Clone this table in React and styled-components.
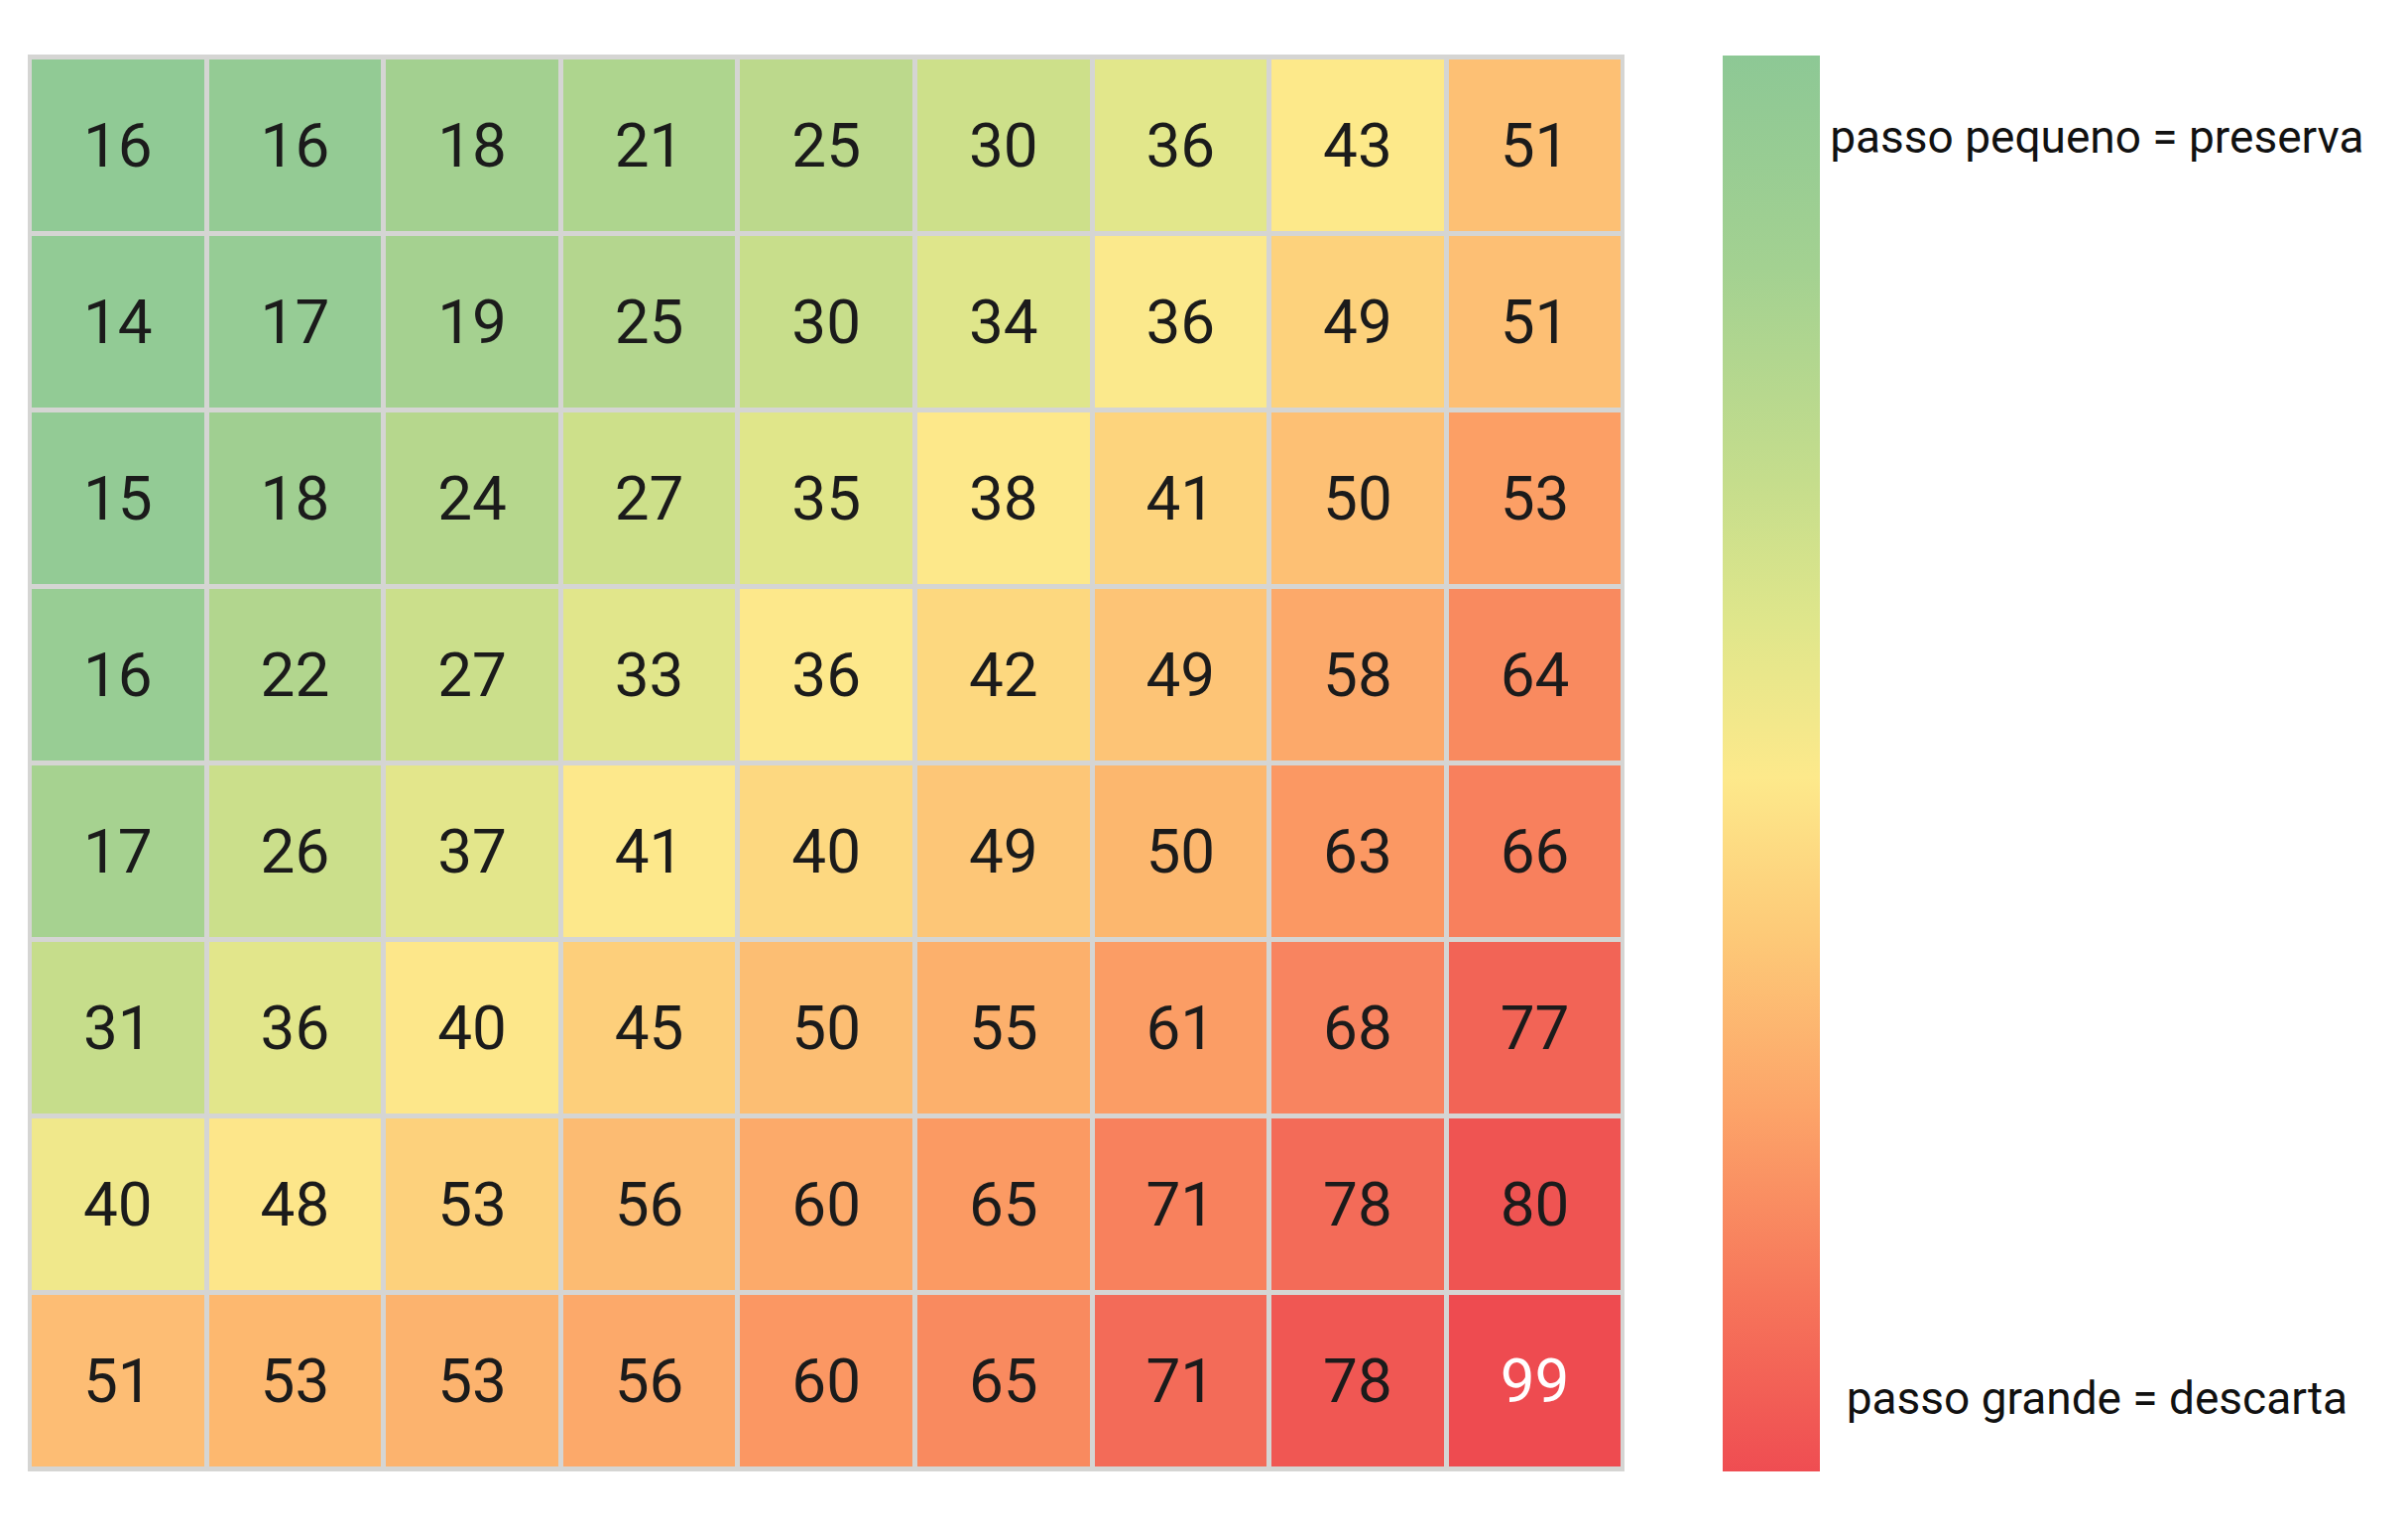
import styled, { createGlobalStyle } from 'styled-components';

const GlobalStyle = createGlobalStyle`
  html, body {
    margin: 0;
    padding: 0;
    background: #ffffff;
  }
  body {
    font-family: Roboto, "Liberation Sans", sans-serif;
  }
`

// [value, background] per row, read off the heat map
const rows = [
  [[16, '#90ca95'], [16, '#94cb94'], [18, '#a3d090'], [21, '#aed58e'], [25, '#bcd98c'], [30, '#cde08a'], [36, '#e2e78b'], [43, '#fde98a'], [51, '#fdc074']],
  [[14, '#92cb95'], [17, '#96cc95'], [19, '#a5d190'], [25, '#b4d68e'], [30, '#c8de8b'], [34, '#dfe68b'], [36, '#fbe98c'], [49, '#fdd27c'], [51, '#fdbf74']],
  [[15, '#93cb95'], [18, '#a0cf91'], [24, '#b6d78d'], [27, '#cde08a'], [35, '#e0e68a'], [38, '#fde88a'], [41, '#fdd47d'], [50, '#fdc074'], [53, '#fc9f65']],
  [[16, '#98cd94'], [22, '#b2d68e'], [27, '#cbdf8b'], [33, '#e1e68b'], [36, '#fde88b'], [42, '#fdd87f'], [49, '#fdc476'], [58, '#fca96a'], [64, '#f98a5f']],
  [[17, '#a6d290'], [26, '#cbdf8b'], [37, '#e3e68b'], [41, '#fde88b'], [40, '#fdd880'], [49, '#fdc677'], [50, '#fcb76e'], [63, '#fb9863'], [66, '#f8805d']],
  [[31, '#c6dd8b'], [36, '#e2e68b'], [40, '#fde78a'], [45, '#fdcf7b'], [50, '#fcbe73'], [55, '#fcb06c'], [61, '#fb9d65'], [68, '#f88460'], [77, '#f26456']],
  [[40, '#f0e88b'], [48, '#fde68a'], [53, '#fdd17c'], [56, '#fcbb72'], [60, '#fcaa6a'], [65, '#fb9a63'], [71, '#f8815d'], [78, '#f36b58'], [80, '#ef5452']],
  [[51, '#fdbd74'], [53, '#fdb86f'], [53, '#fcb36e'], [56, '#fca96a'], [60, '#fb9763'], [65, '#f98a5f'], [71, '#f36b58'], [78, '#f05753'], [99, '#ee4b50']],
]

function App() {
  return (
    <>
      <GlobalStyle />
      <Page>
        <Grid>
          {rows.map((row, r) =>
            row.map(([value, color], c) => (
              <Cell key={`${r}-${c}`} $bg={color} $light={value === 99}>
                {value}
              </Cell>
            ))
          )}
        </Grid>
        <Legend>
          <ScaleBar />
          <Labels>
            <Label>passo pequeno = preserva</Label>
            <Label>passo grande = descarta</Label>
          </Labels>
        </Legend>
      </Page>
    </>
  )
}

const Page = styled.div`
    display: flex;
    align-items: stretch;
    padding: 55px 0 0 28px;
`

const Grid = styled.div`
    display: grid;
    grid-template-columns: repeat(9, 173.6px);
    grid-template-rows: repeat(8, 173px);
    gap: 5px;
    padding: 5px 4px;
    background: #d5d5d3;
`

const Cell = styled.div`
    display: flex;
    align-items: center;
    justify-content: center;
    background-color: ${props => props.$bg};
    color: ${props => (props.$light ? '#ffffff' : '#1b1b1b')};
    font-size: 62px;
    font-weight: 400;
`

const Legend = styled.div`
    display: flex;
    margin-left: 99px;
`

const ScaleBar = styled.div`
    width: 98px;
    margin-top: 1px;
    background: linear-gradient(
        to bottom,
        #8dc895 0%,
        #a3d191 15%,
        #c5dd8c 30%,
        #dfe68b 40%,
        #fde98b 51%,
        #fdca78 62%,
        #fca268 75%,
        #f6745a 88%,
        #ef4d52 100%
    );
`

const Labels = styled.div`
    width: 558px;
    display: flex;
    flex-direction: column;
    justify-content: space-between;
    padding: 56px 0 46px;
`

const Label = styled.div`
    font-size: 46px;
    line-height: 55px;
    color: #111111;
    text-align: center;
`

export default App
